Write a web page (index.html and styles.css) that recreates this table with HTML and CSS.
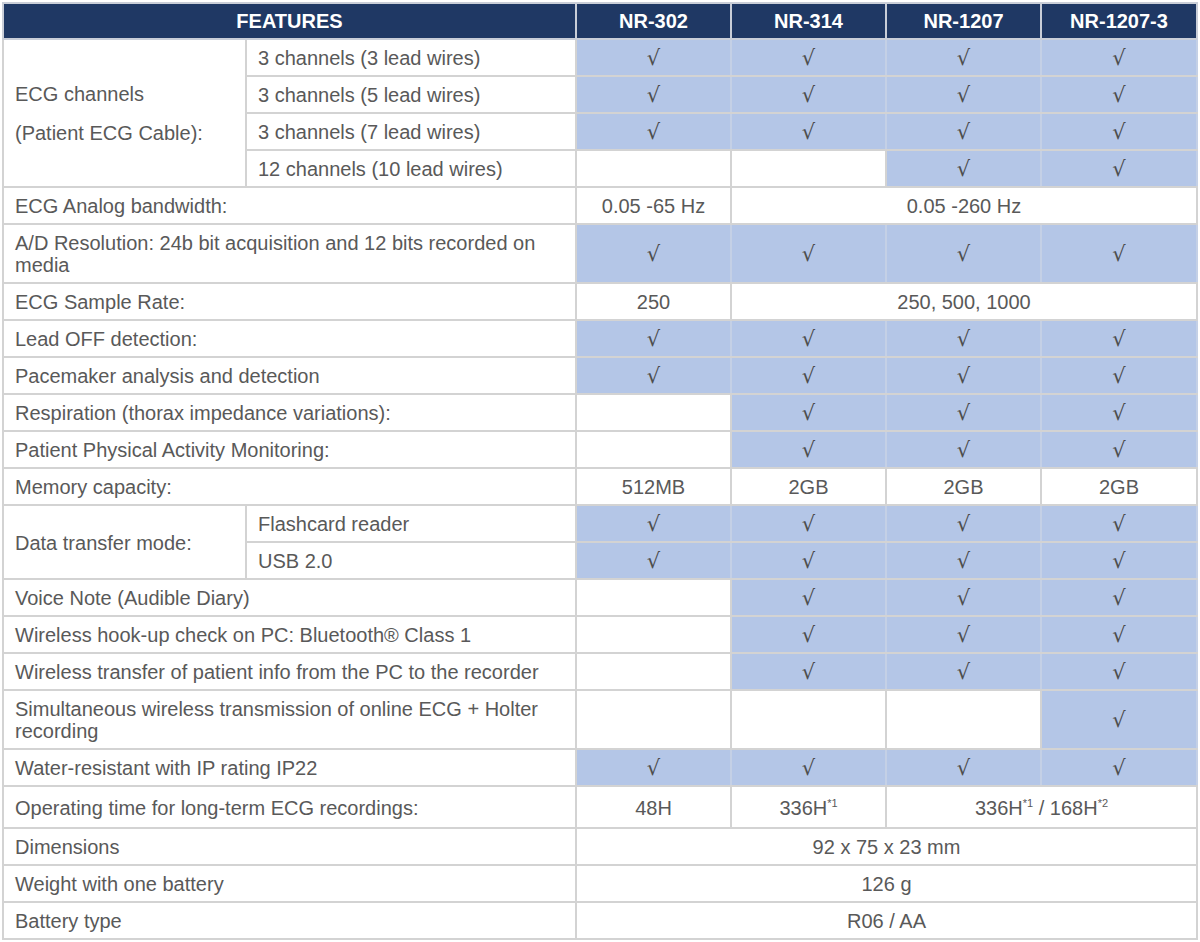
FILE: index.html
```html
<!DOCTYPE html>
<html>
<head>
<meta charset="utf-8">
<link rel="stylesheet" href="styles.css">
</head>
<body>
<div class="wrap">
<table class="spec">
  <colgroup>
    <col class="c-a"><col class="c-b"><col class="c-m"><col class="c-m"><col class="c-m"><col class="c-l">
  </colgroup>
  <thead>
    <tr>
      <th colspan="2" class="h-feat">FEATURES</th>
      <th><span class="narrow">NR-302</span></th>
      <th><span class="narrow">NR-314</span></th>
      <th><span class="narrow">NR-1207</span></th>
      <th><span class="narrow">NR-1207-3</span></th>
    </tr>
  </thead>
  <tbody>
    <tr>
      <td rowspan="4" class="lbl"><div class="ecg"><span>ECG channels</span><span>(Patient ECG Cable):</span></div></td>
      <td class="lbl">3 channels (3 lead wires)</td>
      <td class="y">√</td><td class="y">√</td><td class="y">√</td><td class="y">√</td>
    </tr>
    <tr>
      <td class="lbl">3 channels (5 lead wires)</td>
      <td class="y">√</td><td class="y">√</td><td class="y">√</td><td class="y">√</td>
    </tr>
    <tr>
      <td class="lbl">3 channels (7 lead wires)</td>
      <td class="y">√</td><td class="y">√</td><td class="y">√</td><td class="y">√</td>
    </tr>
    <tr>
      <td class="lbl">12 channels (10 lead wires)</td>
      <td class="n"></td><td class="n"></td><td class="y">√</td><td class="y">√</td>
    </tr>
    <tr>
      <td colspan="2" class="lbl">ECG Analog bandwidth:</td>
      <td class="n">0.05 -65 Hz</td><td colspan="3" class="n">0.05 -260 Hz</td>
    </tr>
    <tr>
      <td colspan="2" class="lbl">A/D Resolution: 24b bit acquisition and 12 bits recorded on media</td>
      <td class="y">√</td><td class="y">√</td><td class="y">√</td><td class="y">√</td>
    </tr>
    <tr>
      <td colspan="2" class="lbl">ECG Sample Rate:</td>
      <td class="n">250</td><td colspan="3" class="n">250, 500, 1000</td>
    </tr>
    <tr>
      <td colspan="2" class="lbl">Lead OFF detection:</td>
      <td class="y">√</td><td class="y">√</td><td class="y">√</td><td class="y">√</td>
    </tr>
    <tr>
      <td colspan="2" class="lbl">Pacemaker analysis and detection</td>
      <td class="y">√</td><td class="y">√</td><td class="y">√</td><td class="y">√</td>
    </tr>
    <tr>
      <td colspan="2" class="lbl">Respiration (thorax impedance variations):</td>
      <td class="n"></td><td class="y">√</td><td class="y">√</td><td class="y">√</td>
    </tr>
    <tr>
      <td colspan="2" class="lbl">Patient Physical Activity Monitoring:</td>
      <td class="n"></td><td class="y">√</td><td class="y">√</td><td class="y">√</td>
    </tr>
    <tr>
      <td colspan="2" class="lbl">Memory capacity:</td>
      <td class="n">512MB</td><td class="n">2GB</td><td class="n">2GB</td><td class="n">2GB</td>
    </tr>
    <tr>
      <td rowspan="2" class="lbl">Data transfer mode:</td>
      <td class="lbl">Flashcard reader</td>
      <td class="y">√</td><td class="y">√</td><td class="y">√</td><td class="y">√</td>
    </tr>
    <tr>
      <td class="lbl">USB 2.0</td>
      <td class="y">√</td><td class="y">√</td><td class="y">√</td><td class="y">√</td>
    </tr>
    <tr>
      <td colspan="2" class="lbl">Voice Note (Audible Diary)</td>
      <td class="n"></td><td class="y">√</td><td class="y">√</td><td class="y">√</td>
    </tr>
    <tr>
      <td colspan="2" class="lbl">Wireless hook-up check on PC: Bluetooth® Class 1</td>
      <td class="n"></td><td class="y">√</td><td class="y">√</td><td class="y">√</td>
    </tr>
    <tr>
      <td colspan="2" class="lbl">Wireless transfer of patient info from the PC to the recorder</td>
      <td class="n"></td><td class="y">√</td><td class="y">√</td><td class="y">√</td>
    </tr>
    <tr>
      <td colspan="2" class="lbl">Simultaneous wireless transmission of online ECG + Holter recording</td>
      <td class="n"></td><td class="n"></td><td class="n"></td><td class="y">√</td>
    </tr>
    <tr>
      <td colspan="2" class="lbl">Water-resistant with IP rating IP22</td>
      <td class="y">√</td><td class="y">√</td><td class="y">√</td><td class="y">√</td>
    </tr>
    <tr class="op">
      <td colspan="2" class="lbl">Operating time for long-term ECG recordings:</td>
      <td class="n">48H</td><td class="n">336H<sup>*1</sup></td><td colspan="2" class="n">336H<sup>*1</sup> / 168H<sup>*2</sup></td>
    </tr>
    <tr>
      <td colspan="2" class="lbl">Dimensions</td>
      <td colspan="4" class="n">92 x 75 x 23 mm</td>
    </tr>
    <tr>
      <td colspan="2" class="lbl">Weight with one battery</td>
      <td colspan="4" class="n">126 g</td>
    </tr>
    <tr>
      <td colspan="2" class="lbl">Battery type</td>
      <td colspan="4" class="n">R06 / AA</td>
    </tr>
  </tbody>
</table>
</div>
</body>
</html>
```

FILE: styles.css
```css
html, body {
  margin: 0;
  padding: 0;
  background: #ffffff;
}

.wrap {
  padding: 2px 4px 0 2px;
}

.spec {
  width: 1194px;
  border-collapse: collapse;
  table-layout: fixed;
  font-family: "Liberation Sans", Arial, sans-serif;
  font-size: 20px;
  line-height: 22px;
  color: #595959;
}

.c-a { width: 243px; }
.c-b { width: 330px; }
.c-m { width: 155px; }
.c-l { width: 156px; }

.spec th,
.spec td {
  border: 2px solid #d3d3d3;
}

.spec th {
  background: #1f3864;
  color: #ffffff;
  font-weight: bold;
  font-size: 20px;
  height: 22px;
  padding: 6px 4px 6px;
  text-align: center;
  border-color: #c9ced8;
}

.narrow {
  font-family: "Liberation Sans Narrow", "Liberation Sans", Arial, sans-serif;
}

.spec td {
  padding: 7px 11px 6px;
  vertical-align: middle;
}

.spec td.lbl {
  text-align: left;
}

.spec td.n {
  text-align: center;
  background: #ffffff;
}

.spec td.y {
  text-align: center;
  background: #b4c6e7;
  font-family: "DejaVu Serif", "Liberation Serif", serif;
  font-size: 21px;
  color: #4d4d4d;
  border-left-color: #c4d0e6;
  border-right-color: #c4d0e6;
}

.ecg {
  display: flex;
  flex-direction: column;
  gap: 17px;
}

.op td {
  padding-top: 10px;
  padding-bottom: 8px;
}

sup {
  font-size: 11px;
  line-height: 0;
  vertical-align: 8px;
}
```
